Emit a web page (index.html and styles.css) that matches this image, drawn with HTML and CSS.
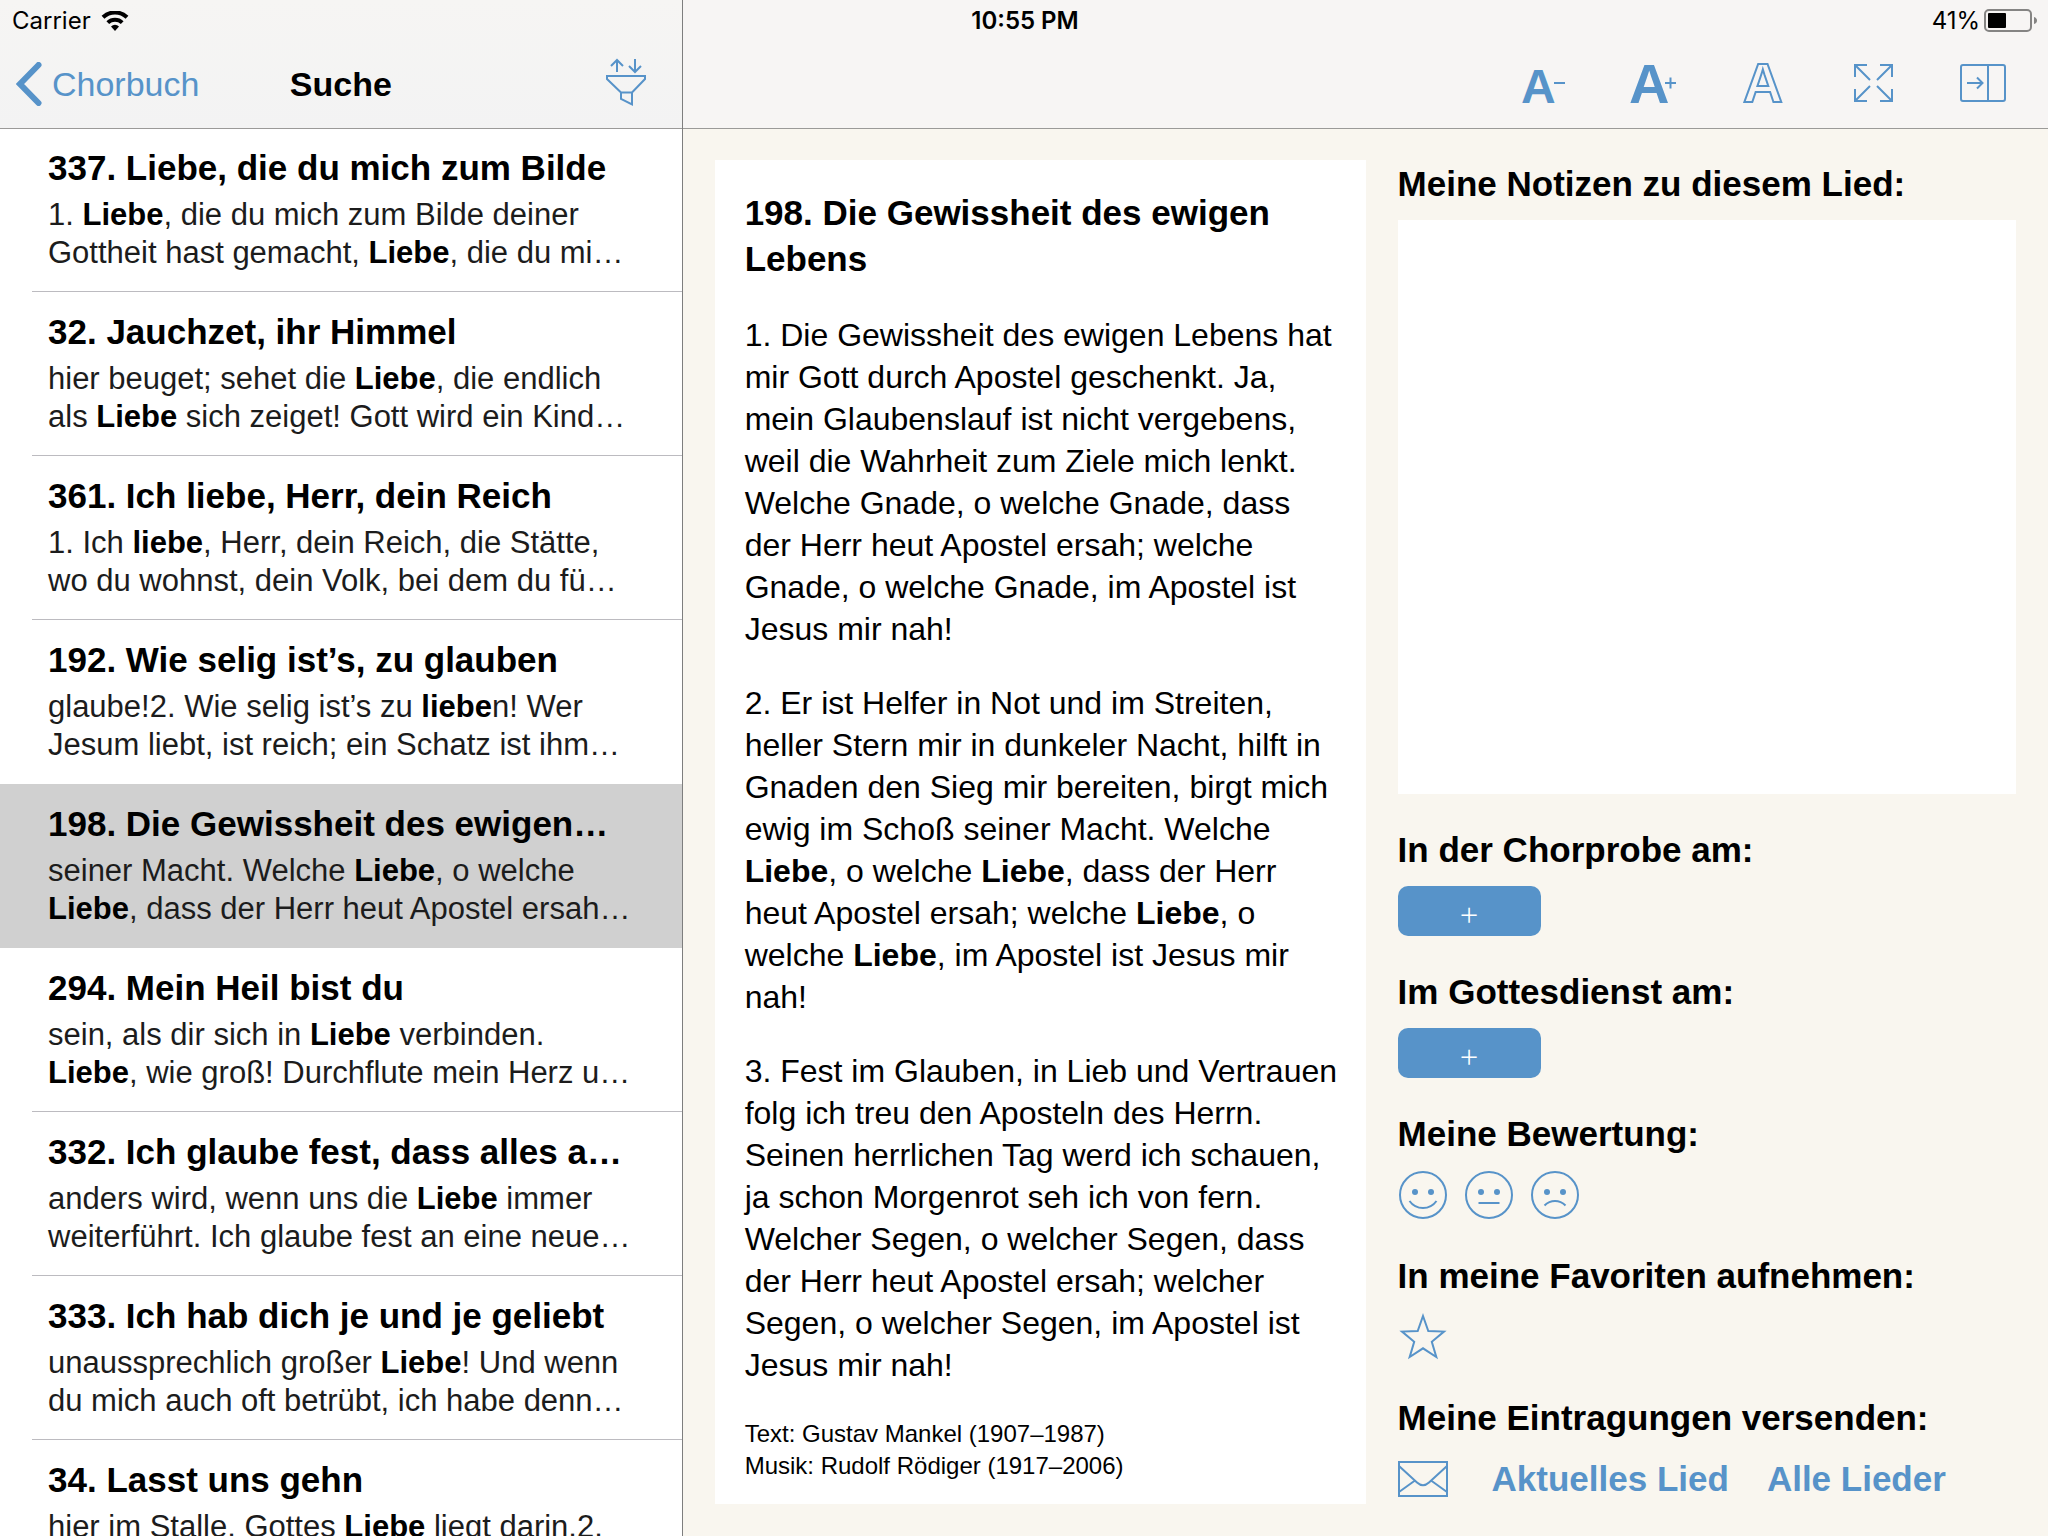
FILE: index.html
```
<!DOCTYPE html>
<html lang="de">
<head>
<meta charset="utf-8">
<title>Chorbuch – Suche</title>
<meta name="viewport" content="width=device-width, initial-scale=1">
<link rel="stylesheet" href="styles.css">
</head>
<body>
<div class="app">

  <div class="status">
    <div class="status-left">
      <span>Carrier</span>
      <svg class="wifi" viewBox="0 0 28 20" aria-label="WLAN" role="img">
        <path d="M14 20l-4-4.600a6 6 0 0 1 8 0z" fill="#000"/>
        <path d="M6.800 11.600a10.500 10.500 0 0 1 14.400 0M2 6.200a17.400 17.400 0 0 1 24 0" fill="none" stroke="#000" stroke-width="4"/>
      </svg>
    </div>
    <div class="status-time">10:55 PM</div>
    <div class="status-right">
      <span>41%</span>
      <svg class="battery" viewBox="0 0 54 24" aria-label="Batterie" role="img">
        <rect x="1" y="1" width="46" height="21" rx="4" fill="none" stroke="#858483" stroke-width="2"/>
        <rect x="4" y="4" width="18" height="15" rx="1" fill="#000"/>
        <path d="M50 8q3 1 3 3.500t-3 3.500z" fill="#858483"/>
      </svg>
    </div>
  </div>

  <aside class="sidebar">
    <header class="bar">
      <a class="back" href="#">
        <svg class="chevron" viewBox="0 0 26 44" aria-hidden="true"><path d="M22.500 3L4 22l18.500 19" fill="none" stroke="currentColor" stroke-width="6" stroke-linecap="round"/></svg>
        Chorbuch
      </a>
      <h1 class="bar-title">Suche</h1>
      <button class="icon-button filter" type="button" aria-label="Filtern">
        <svg viewBox="0 0 48 48" class="icon">
          <path d="M15 14V2M9 8l6-6 6 6M33 1v12M27 8l6 6 6-6"/>
          <path d="M4 18h39v3L30 34.500H19L5 21v-3M19 34.500v6.500l11 5.500v-12"/>
        </svg>
      </button>
    </header>
    <ul class="results">
      <li><a class="result" href="#"><span class="result-title">337. Liebe, die du mich zum Bilde</span><span class="snippet">1. <b>Liebe</b>, die du mich zum Bilde deiner<br>Gottheit hast gemacht, <b>Liebe</b>, die du mi…</span></a></li>
      <li><a class="result" href="#"><span class="result-title">32. Jauchzet, ihr Himmel</span><span class="snippet">hier beuget; sehet die <b>Liebe</b>, die endlich<br>als <b>Liebe</b> sich zeiget! Gott wird ein Kind…</span></a></li>
      <li><a class="result" href="#"><span class="result-title">361. Ich liebe, Herr, dein Reich</span><span class="snippet">1. Ich <b>liebe</b>, Herr, dein Reich, die Stätte,<br>wo du wohnst, dein Volk, bei dem du fü…</span></a></li>
      <li><a class="result before-selected" href="#"><span class="result-title">192. Wie selig ist’s, zu glauben</span><span class="snippet">glaube!2. Wie selig ist’s zu <b>liebe</b>n! Wer<br>Jesum liebt, ist reich; ein Schatz ist ihm…</span></a></li>
      <li><a class="result selected" href="#" aria-current="true"><span class="result-title">198. Die Gewissheit des ewigen…</span><span class="snippet">seiner Macht. Welche <b>Liebe</b>, o welche<br><b>Liebe</b>, dass der Herr heut Apostel ersah…</span></a></li>
      <li><a class="result" href="#"><span class="result-title">294. Mein Heil bist du</span><span class="snippet">sein, als dir sich in <b>Liebe</b> verbinden.<br><b>Liebe</b>, wie groß! Durchflute mein Herz u…</span></a></li>
      <li><a class="result" href="#"><span class="result-title">332. Ich glaube fest, dass alles a…</span><span class="snippet">anders wird, wenn uns die <b>Liebe</b> immer<br>weiterführt. Ich glaube fest an eine neue…</span></a></li>
      <li><a class="result" href="#"><span class="result-title">333. Ich hab dich je und je geliebt</span><span class="snippet">unaussprechlich großer <b>Liebe</b>! Und wenn<br>du mich auch oft betrübt, ich habe denn…</span></a></li>
      <li><a class="result" href="#"><span class="result-title">34. Lasst uns gehn</span><span class="snippet">hier im Stalle. Gottes <b>Liebe</b> liegt darin.2.</span></a></li>
    </ul>
  </aside>

  <main class="main">
    <header class="bar toolbar">
      <button class="icon-button" type="button" aria-label="Schrift kleiner">
        <svg viewBox="0 0 48 48" class="icon"><text class="letter" x="2" y="45" font-size="48">A</text><path d="M35 25h11"/></svg>
      </button>
      <button class="icon-button" type="button" aria-label="Schrift größer">
        <svg viewBox="0 0 48 48" class="icon"><text class="letter" x="0" y="45" font-size="56">A</text><path d="M36 25h11M41.500 19.500v11"/></svg>
      </button>
      <button class="icon-button" type="button" aria-label="Schriftart">
        <svg viewBox="0 0 48 48" class="icon"><text class="letter outline" x="4" y="44" font-size="55">A</text></svg>
      </button>
      <button class="icon-button" type="button" aria-label="Vollbild">
        <svg viewBox="0 0 48 48" class="icon"><path d="M18 7H6v12M6 7l15 15M31 7h12v12M43 7L28 22M6 31v12h12M6 43l15-15M43 31v12H31M43 43L28 28"/></svg>
      </button>
      <button class="icon-button" type="button" aria-label="Seitenleiste ausblenden">
        <svg viewBox="0 0 48 48" class="icon"><rect x="2" y="7" width="44" height="36" rx="2"/><path d="M29 7v36M8 25h15M18 19.500l5.500 5.500-5.500 5.500"/></svg>
      </button>
    </header>

    <div class="content">
      <article class="song">
        <h2 class="heading song-title">198. Die Gewissheit des ewigen Lebens</h2>
        <p>1. Die Gewissheit des ewigen Lebens hat mir Gott durch Apostel geschenkt. Ja, mein Glaubenslauf ist nicht vergebens, weil die Wahrheit zum Ziele mich lenkt. Welche Gnade, o welche Gnade, dass der Herr heut Apostel ersah; welche Gnade, o welche Gnade, im Apostel ist Jesus mir nah!</p>
        <p>2. Er ist Helfer in Not und im Streiten, heller Stern mir in dunkeler Nacht, hilft in Gnaden den Sieg mir bereiten, birgt mich ewig im Schoß seiner Macht. Welche <b>Liebe</b>, o welche <b>Liebe</b>, dass der Herr heut Apostel ersah; welche <b>Liebe</b>, o welche <b>Liebe</b>, im Apostel ist Jesus mir nah!</p>
        <p>3. Fest im Glauben, in Lieb und Vertrauen folg ich treu den Aposteln des Herrn. Seinen herrlichen Tag werd ich schauen, ja schon Morgenrot seh ich von fern. Welcher Segen, o welcher Segen, dass der Herr heut Apostel ersah; welcher Segen, o welcher Segen, im Apostel ist Jesus mir nah!</p>
        <p class="credits">Text: Gustav Mankel (1907–1987)<br>Musik: Rudolf Rödiger (1917–2006)</p>
      </article>

      <form class="details">
        <section class="field field-notes">
          <label class="heading" for="notes">Meine Notizen zu diesem Lied:</label>
          <textarea class="notes" id="notes"></textarea>
        </section>
        <section class="field">
          <h3 class="heading">In der Chorprobe am:</h3>
          <div class="controls"><button class="add" type="button">+</button></div>
        </section>
        <section class="field">
          <h3 class="heading">Im Gottesdienst am:</h3>
          <div class="controls"><button class="add" type="button">+</button></div>
        </section>
        <section class="field">
          <h3 class="heading">Meine Bewertung:</h3>
          <div class="controls ratings">
            <button class="icon-button" type="button" aria-label="Gut"><svg viewBox="0 0 50 50" class="icon"><circle cx="25" cy="25" r="23"/><path d="M11.500 31q5 7 13.500 7t13.500-7"/><circle class="dot" cx="17" cy="22" r="3"/><circle class="dot" cx="33" cy="22" r="3"/></svg></button>
            <button class="icon-button" type="button" aria-label="Neutral"><svg viewBox="0 0 50 50" class="icon"><circle cx="25" cy="25" r="23"/><path d="M14.500 33h21"/><circle class="dot" cx="17" cy="22" r="3"/><circle class="dot" cx="33" cy="22" r="3"/></svg></button>
            <button class="icon-button" type="button" aria-label="Schlecht"><svg viewBox="0 0 50 50" class="icon"><circle cx="25" cy="25" r="23"/><path d="M14.500 35.500q4.500-4.500 10.500-4.500t10.500 4.500"/><circle class="dot" cx="17" cy="22" r="3"/><circle class="dot" cx="33" cy="22" r="3"/></svg></button>
          </div>
        </section>
        <section class="field">
          <h3 class="heading">In meine Favoriten aufnehmen:</h3>
          <div class="controls">
            <button class="icon-button" type="button" aria-label="Favorit"><svg viewBox="0 0 50 50" class="icon"><path d="M25 4l5.300 15L46 19.600 33.800 29.800 38.300 45 25 36.300 11.700 45 16.200 29.800 4 19.600l15.700-.600z"/></svg></button>
          </div>
        </section>
        <section class="field">
          <h3 class="heading">Meine Eintragungen versenden:</h3>
          <div class="controls send">
            <svg viewBox="0 0 50 50" class="icon mail" aria-hidden="true"><rect x="1" y="8" width="48" height="34"/><path d="M1 12l18 16.500q6 5.500 12 0L49 12M1 38l16-11.500M49 38L33 26.500"/></svg>
            <a class="send-link" href="#">Aktuelles Lied</a>
            <a class="send-link" href="#">Alle Lieder</a>
          </div>
        </section>
      </form>
    </div>
  </main>
</div>
</body>
</html>
```
FILE: styles.css
```
:root {
  --blue: #5793c9;
  --paper: #f9f6ef;
  --line: #9b9a98;
}

* {
  box-sizing: border-box;
}

body {
  margin: 0;
  background: var(--paper);
  color: #000;
  font: 32px/42px "Liberation Sans", Arial, sans-serif;
}

h1, h2, h3, p, ul {
  margin: 0;
  padding: 0;
}

button {
  padding: 0;
  border: 0;
  background: none;
  color: inherit;
  font: inherit;
}

a {
  color: inherit;
  text-decoration: none;
}

/* Two panes with the status bar sharing the top of both */
.app {
  display: grid;
  grid-template-columns: 1fr 2fr;
  grid-template-rows: 42px 1fr;
  height: 100vh;
  overflow: hidden;
}

.status {
  z-index: 2;
  grid-area: 1 / 1 / 2 / 3;
  display: grid;
  grid-template-columns: 1fr auto 1fr;
  align-items: center;
  padding: 0 10px 0 12px;
  font: 24px/42px Inter, sans-serif;
}

.status-left,
.status-right {
  display: flex;
  align-items: center;
  gap: 10px;
}

.status-right {
  justify-content: flex-end;
  gap: 4px;
}

.status-time {
  font-weight: 600;
}

.wifi {
  width: 28px;
  height: 20px;
}

.battery {
  width: 54px;
  height: 24px;
}

.sidebar {
  grid-area: 1 / 1 / 3 / 2;
  border-right: 1px solid #7e7e7e;
  background: #fff;
  min-width: 0;
  overflow: hidden;
}

.main {
  grid-area: 1 / 2 / 3 / 3;
  display: flex;
  flex-direction: column;
  min-width: 0;
}

.bar {
  display: grid;
  grid-template-columns: 1fr auto 1fr;
  align-items: center;
  height: 128px;
  padding: 40px 16px 0;
  background: linear-gradient(#f6f5f3, #f3f3f3);
  box-shadow: 0 1px var(--line);
  position: relative;
  font-size: 34px;
}

.back {
  display: flex;
  align-items: center;
  gap: 10px;
  color: var(--blue);
}

.chevron {
  width: 26px;
  height: 44px;
}

.bar-title {
  font-size: 34px;
}

.filter {
  justify-self: end;
  margin-right: 16px;
}

.toolbar {
  display: flex;
  justify-content: flex-end;
  gap: 62px;
  padding-right: 41px;
  background: #f7f5f4;
}

.icon-button {
  display: block;
  width: 48px;
  height: 48px;
  color: var(--blue);
}

.bar .icon-button {
  margin-bottom: 4px;
}

.icon {
  display: block;
  width: 100%;
  height: 100%;
  fill: none;
  stroke: currentColor;
  stroke-width: 2;
  overflow: visible;
}

.letter {
  fill: currentColor;
  stroke: none;
  font-family: "Liberation Sans", Arial, sans-serif;
  font-weight: 700;
}

.outline {
  fill: none;
  stroke: currentColor;
}

.dot {
  fill: currentColor;
  stroke: none;
}

/* Search results */
.results {
  list-style: none;
}

.result {
  display: block;
  height: 164px;
  padding: 18px 0 0 48px;
  background: linear-gradient(#bcbbc0, #bcbbc0) 32px 100% / 100% 1px no-repeat;
  white-space: nowrap;
}

.result.selected {
  background: #d0d0d0;
}

.result.before-selected {
  background: none;
}

.result-title {
  display: block;
  font-size: 35px;
  font-weight: 700;
  line-height: 44px;
}

.snippet {
  display: block;
  padding-top: 6px;
  font-size: 31px;
  line-height: 38px;
  color: #1c1c1c;
}

.snippet b {
  color: #000;
}

/* Song text and personal notes */
.content {
  flex: 1;
  display: grid;
  grid-template-columns: 20fr 19fr;
  gap: 32px;
  padding: 32px;
}

.heading {
  display: block;
  font-size: 35px;
  font-weight: 700;
  line-height: 42px;
}

.song {
  display: flex;
  flex-direction: column;
  gap: 32px;
  padding: 30px 28px 0 30px;
  background: #fff;
}

.song-title {
  line-height: 46px;
}

.song .credits {
  font-size: 24px;
  line-height: 32px;
}

.details {
  display: flex;
  flex-direction: column;
  gap: 35px;
  padding-top: 3px;
}

.field {
  display: flex;
  flex-direction: column;
  gap: 15px;
}

.field-notes {
  flex: 1;
}

.notes {
  flex: 1;
  display: block;
  width: 100%;
  padding: 16px;
  border: 0;
  background: #fff;
  font: inherit;
  resize: none;
}

.controls {
  display: flex;
  align-items: center;
  height: 50px;
}

.add {
  width: 143px;
  height: 50px;
  padding-top: 2px;
  border-radius: 10px;
  background: var(--blue);
  color: #fff;
  font: 200 35px/48px Inter, sans-serif;
}

.ratings {
  gap: 16px;
}

.controls .icon-button {
  width: 50px;
  height: 50px;
}

.send {
  gap: 38px;
}

.mail {
  width: 50px;
  height: 50px;
  margin-right: 6px;
  color: var(--blue);
}

.send-link {
  color: var(--blue);
  font-size: 35px;
  font-weight: 700;
}
```
